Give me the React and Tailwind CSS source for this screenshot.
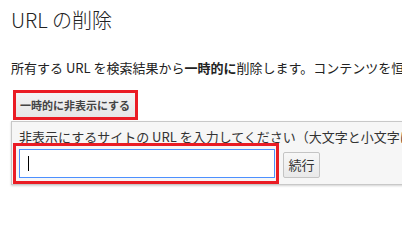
export default function App() {
  const font = { fontFamily: '"Noto Sans CJK JP", "Noto Sans", sans-serif' };
  return (
    <div
      className="w-[402px] h-[208px] bg-white overflow-hidden text-[#222]"
      style={font}
    >
      <div className="pl-[11px] pt-[8px] text-[20px] leading-[24px] font-light text-[#222] whitespace-nowrap">
        URL の削除
      </div>
      <div className="pl-[11px] mt-[28px] text-[13px] leading-[16px] whitespace-nowrap text-[#222]">
        所有する URL を検索結果から<span className="font-bold">一時的に</span>削除します。コンテンツを恒久的に削除するには
      </div>
      <div className="ml-[13px] mt-[14px] w-[125px] h-[30px] border-[3px] border-[#ea1c24]">
        <div className="w-full h-full bg-gradient-to-b from-[#f4f4f4] to-[#e6e6e6] flex items-center pl-[4px] text-[11px] leading-[14px] font-bold text-[#444] whitespace-nowrap">
          一時的に非表示にする
        </div>
      </div>
      <div className="ml-[11px] mt-[1px] w-[420px] border border-[#c8c8c8] bg-[#f6f6f6] shadow-[0_1px_2px_rgba(0,0,0,0.18)]">
        <div className="pl-[7px] pt-[8px] text-[13px] leading-[13px] whitespace-nowrap text-[#333]">
          非表示にするサイトの URL を入力してください（大文字と小文字は区別されます）
        </div>
        <div className="flex items-start">
          <div className="ml-[1px] w-[266px] h-[41px] border-[3px] border-[#ea1c24] pl-[3px] pt-[3px]">
            <div className="w-[256px] h-[29px] border border-[#4d90fe] bg-white flex items-center pl-[8px]">
              <div className="w-[1px] h-[15px] bg-black" />
            </div>
          </div>
          <div className="ml-[4px] mt-[9px] w-[37px] h-[26px] border border-[#c4c4c4] rounded-[2px] bg-gradient-to-b from-[#f7f7f7] to-[#e9e9e9] flex items-center justify-center text-[13px] leading-[16px] text-[#333]">
            続行
          </div>
        </div>
      </div>
    </div>
  );
}
